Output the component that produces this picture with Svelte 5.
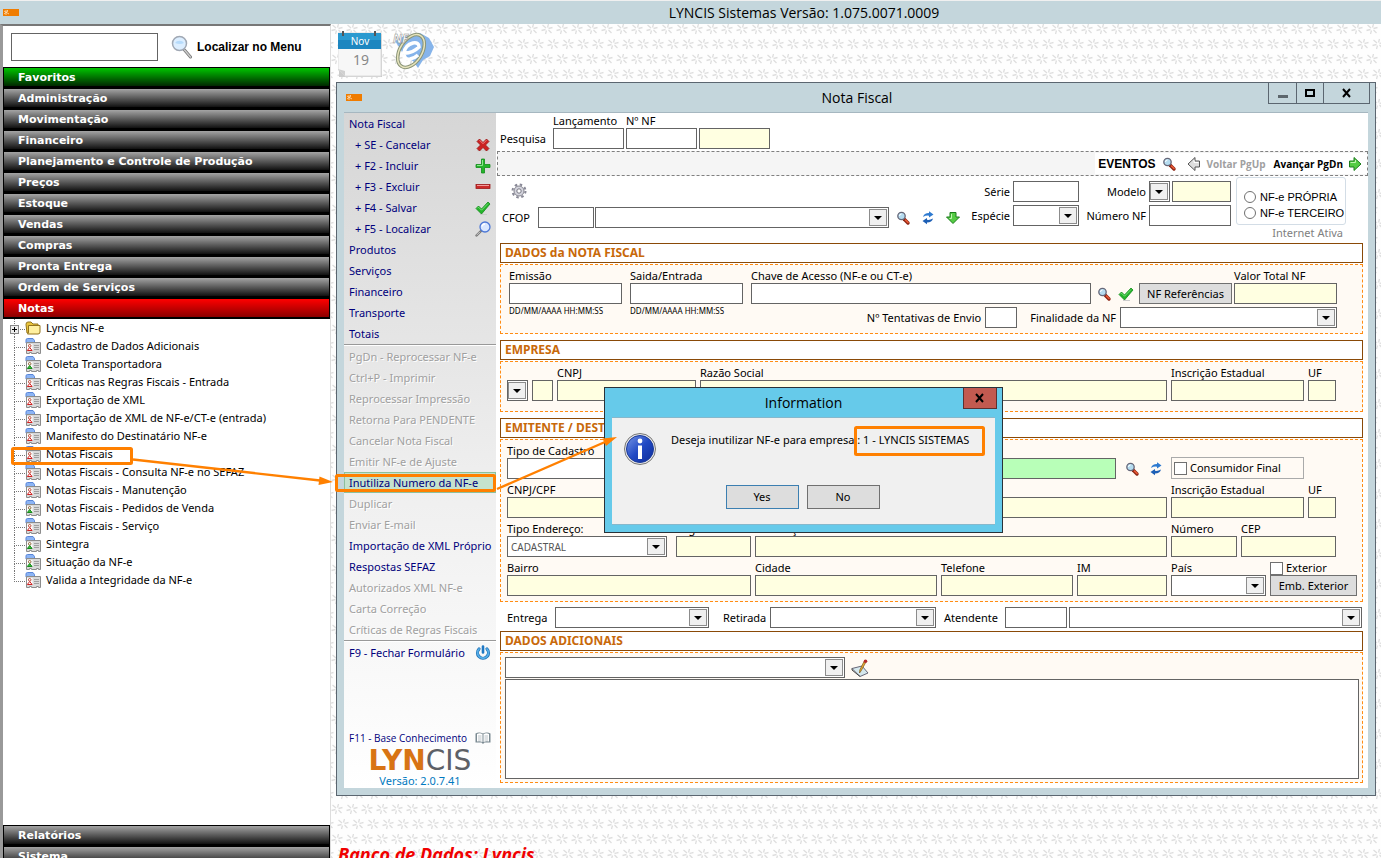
<script>
  const topMenu = [
    { label: 'Favoritos', tone: 'green' },
    { label: 'Administração' },
    { label: 'Movimentação' },
    { label: 'Financeiro' },
    { label: 'Planejamento e Controle de Produção' },
    { label: 'Preços' },
    { label: 'Estoque' },
    { label: 'Vendas' },
    { label: 'Compras' },
    { label: 'Pronta Entrega' },
    { label: 'Ordem de Serviços' },
    { label: 'Notas', tone: 'red' }
  ];
  const bottomMenu = [{ label: 'Relatórios' }, { label: 'Sistema' }];

  const tree = [
    { label: 'Lyncis NF-e', icon: 'folder' },
    { label: 'Cadastro de Dados Adicionais', icon: 'card-red' },
    { label: 'Coleta Transportadora', icon: 'card-green' },
    { label: 'Críticas nas Regras Fiscais - Entrada', icon: 'card-red' },
    { label: 'Exportação de XML', icon: 'card-red' },
    { label: 'Importação de XML de NF-e/CT-e (entrada)', icon: 'card-red' },
    { label: 'Manifesto do Destinatário NF-e', icon: 'card-red' },
    { label: 'Notas Fiscais', icon: 'card-red' },
    { label: 'Notas Fiscais - Consulta NF-e no SEFAZ', icon: 'card-red' },
    { label: 'Notas Fiscais - Manutenção', icon: 'card-red' },
    { label: 'Notas Fiscais - Pedidos de Venda', icon: 'card-green' },
    { label: 'Notas Fiscais - Serviço', icon: 'card-red' },
    { label: 'Sintegra', icon: 'card-green' },
    { label: 'Situação da NF-e', icon: 'card-green' },
    { label: 'Valida a Integridade da NF-e', icon: 'card-red' }
  ];

  const mainActions = [
    { label: 'Nota Fiscal' },
    { label: '+ SE - Cancelar', sub: true, icon: 'cancel' },
    { label: '+ F2 - Incluir', sub: true, icon: 'plus' },
    { label: '+ F3 - Excluir', sub: true, icon: 'minus' },
    { label: '+ F4 - Salvar', sub: true, icon: 'check' },
    { label: '+ F5 - Localizar', sub: true, icon: 'find' },
    { label: 'Produtos' },
    { label: 'Serviços' },
    { label: 'Financeiro' },
    { label: 'Transporte' },
    { label: 'Totais' }
  ];
  const extraActions = [
    { label: 'PgDn - Reprocessar NF-e', off: true },
    { label: 'Ctrl+P - Imprimir', off: true },
    { label: 'Reprocessar Impressão', off: true },
    { label: 'Retorna Para PENDENTE', off: true },
    { label: 'Cancelar Nota Fiscal', off: true },
    { label: 'Emitir NF-e de Ajuste', off: true },
    { label: 'Inutiliza Numero da NF-e', selected: true },
    { label: 'Duplicar', off: true },
    { label: 'Enviar E-mail', off: true },
    { label: 'Importação de XML Próprio' },
    { label: 'Respostas SEFAZ' },
    { label: 'Autorizados XML NF-e', off: true },
    { label: 'Carta Correção', off: true },
    { label: 'Críticas de Regras Fiscais', off: true }
  ];
</script>

{#snippet icon(name)}
  <svg class="icon" width="16" height="16" aria-hidden="true"><use href="#i-{name}" /></svg>
{/snippet}

{#snippet combo(id, label, text)}
  <span class="combo">
    <select {id} aria-label={label}>
      <option>{text ?? ''}</option>
    </select>
    <svg class="drop" width="18" height="17" aria-hidden="true"><use href="#i-drop" /></svg>
  </span>
{/snippet}

{#snippet field(id, label, tone)}
  <div class="field">
    <label for={id}>{label}</label>
    <input {id} type="text" class={tone} />
  </div>
{/snippet}

{#snippet comboField(id, label, text)}
  <div class="field">
    <label for={id}>{label}</label>
    {@render combo(id, undefined, text)}
  </div>
{/snippet}

{#snippet actions(list)}
  {#each list as item}
    <button class="action" class:sub={item.sub} class:selected={item.selected} disabled={item.off}>
      <span>{item.label}</span>
      {#if item.icon}{@render icon(item.icon)}{/if}
    </button>
  {/each}
{/snippet}

{#snippet badge()}
  <svg class="badge" width="16" height="7" aria-hidden="true">
    <rect width="16" height="7" fill="#f07c00" />
    <path d="M1 2l5 3M1 5l4-3M3 1v5M4 1l1 1" stroke="#ffe0b8" stroke-width=".8" />
  </svg>
{/snippet}

<svg class="sprite" aria-hidden="true">
  <symbol id="i-drop" viewBox="0 0 18 17">
    <rect x=".5" y=".5" width="17" height="16" fill="#f0f0f0" stroke="#8c8c8c" />
    <path d="M5 7h8l-4 4z" fill="#000" />
  </symbol>
  <symbol id="i-cancel" viewBox="0 0 16 16">
    <path d="M2 13.500h12" stroke="#ccc" stroke-width="1.500" />
    <path d="M4.500 2 8 5.500 11.500 2 14 4.500 10.500 8l3.500 3.500-2.500 2.500L8 10.500 4.500 14 2 11.500 5.500 8 2 4.500z" fill="#cc2222" stroke="#991515" stroke-width=".8" />
    <path d="M4.500 3.200 8 6.700l3.500-3.500" fill="none" stroke="#f08080" />
  </symbol>
  <symbol id="i-plus" viewBox="0 0 16 16">
    <path d="M6.500 1h3v5.500H15v3H9.500V15h-3V9.500H1v-3h5.500z" fill="#25b52b" stroke="#118a1a" stroke-width=".8" />
    <path d="M7.500 2v5.500H2" fill="none" stroke="#8be68c" />
  </symbol>
  <symbol id="i-minus" viewBox="0 0 16 16">
    <rect x="1" y="5.500" width="14" height="4" fill="#cc2a2a" stroke="#9b1a1a" stroke-width=".8" />
    <path d="M2 6.500h12" stroke="#f29a9a" />
  </symbol>
  <symbol id="i-check" viewBox="0 0 16 16">
    <path d="M5 14.500h7" stroke="#ccc" />
    <path d="M1 8.500 3.500 6 6.500 9 13 2l2 2L6.500 14z" fill="#25b52b" stroke="#118a1a" stroke-width=".8" />
    <path d="M2.500 8.200l1-1 3 3L13 3.500" fill="none" stroke="#8be68c" stroke-width=".8" />
  </symbol>
  <symbol id="i-find" viewBox="0 0 16 16">
    <path d="M1.500 14.500l4.500-4.500" stroke="#777" stroke-width="2.400" stroke-linecap="round" />
    <path d="M1.500 14.300l3.500-3.500" stroke="#ccc" stroke-width="1" />
    <circle cx="10" cy="6" r="5" fill="#d9e7ff" stroke="#4d78d6" stroke-width="1.300" />
    <path d="M7 5.500a3 3 0 0 1 3-2.500" stroke="#fff" stroke-width="1.300" fill="none" />
  </symbol>
  <symbol id="i-search" viewBox="0 0 16 16">
    <path d="M9 9l4 4" stroke="#8a2413" stroke-width="3.400" stroke-linecap="round" />
    <path d="M10.500 10l2.500 2.500" stroke="#ee5a35" stroke-width="1.600" stroke-linecap="round" />
    <circle cx="6.500" cy="6" r="3.700" fill="#b5dcf0" stroke="#667" stroke-width="1.300" />
    <path d="M4.500 6a2 2 0 0 1 2-2" stroke="#fff" fill="none" />
  </symbol>
  <symbol id="i-refresh" viewBox="0 0 16 16">
    <path d="M3 7q1-4 6-4V1.200l4.500 3.300L9 7.500V5.700Q6 5.200 3 7z" fill="#2e7ad0" />
    <path d="M13 8.500q-1 4-6 4v1.800L2.500 11 7 8v1.800q3 .5 6-1.300z" fill="#1d5fb5" />
  </symbol>
  <symbol id="i-down" viewBox="0 0 16 16">
    <path d="M5 2.500h6v4.500h3.500L8 13.500 1.500 7H5z" fill="#55cc44" stroke="#1b7d1b" />
    <path d="M6.500 4v4.500h-2" fill="none" stroke="#c0f5b0" />
  </symbol>
  <symbol id="i-right" viewBox="0 0 16 16">
    <path d="M2.500 5v6h4.500v3.500L14 8 7 1.500V5z" fill="#55cc44" stroke="#1b7d1b" />
    <path d="M3.500 6.500h5V4" fill="none" stroke="#c0f5b0" />
  </symbol>
  <symbol id="i-left" viewBox="0 0 16 16">
    <path d="M13.500 5v6H9v3.500L2 8l7-6.500V5z" fill="#dedede" stroke="#555" />
    <path d="M12.500 6.500H8V4" fill="none" stroke="#fff" />
  </symbol>
  <symbol id="i-gear" viewBox="0 0 16 16">
    <circle cx="8" cy="8" r="6.500" fill="none" stroke="#888896" stroke-width="2" stroke-dasharray="2.500 2.600" />
    <circle cx="8" cy="8" r="5" fill="#d5d5de" stroke="#85858f" />
    <circle cx="8" cy="8" r="2.200" fill="#fff" stroke="#777783" />
  </symbol>
  <symbol id="i-power" viewBox="0 0 16 16">
    <path d="M4 4a5.500 5.500 0 1 0 8 0" fill="none" stroke="#1e6fb4" stroke-width="3.200" stroke-linecap="round" />
    <path d="M4 4a5.500 5.500 0 1 0 8 0" fill="none" stroke="#55aee8" stroke-width="1.800" stroke-linecap="round" />
    <path d="M8 1.500v6" stroke="#1e78c4" stroke-width="2.600" stroke-linecap="round" />
  </symbol>
  <symbol id="i-book" viewBox="0 0 16 16">
    <path d="M.5 3.500q3.500-2 7.500 0 4-2 7.500 0v9H9.500L8 14l-1.500-1.500h-6z" fill="#7b8a92" />
    <path d="M2 4q3-1.500 5.500.300V12Q5 10.800 2 11.500zM14 4q-3-1.500-5.500.300V12q2.500-1.200 5.500-.5z" fill="#fff" />
    <path d="M3 6h3.500M3 8h3.500M3 10h3.500M9.500 6H13M9.500 8H13M9.500 10H13" stroke="#a9b4ba" stroke-width=".8" />
  </symbol>
  <symbol id="i-edit" viewBox="0 0 18 18">
    <path d="M1 9.500 11 7l6 7-8 3.500z" fill="#d5e8ee" stroke="#667" />
    <path d="M1 9.500v1.500l8 6.500" fill="none" stroke="#444" />
    <path d="M15 3 10 12l-1.500 2 .300-3L13 2.500z" fill="#e8a92e" stroke="#7a5a1e" stroke-width=".7" />
    <circle cx="14.500" cy="2.200" r="1.800" fill="#b52a2a" />
  </symbol>
  <symbol id="i-folder" viewBox="0 0 16 16">
    <path d="M1 4.500Q1 2 3 2h3l2 2h5v9H2z" fill="#e9c43c" stroke="#94741c" />
    <path d="M3.500 5.500h11.500V12q0 2-2 2H2.500q1-1 1-2z" fill="#fff0a0" stroke="#94741c" />
  </symbol>
  <symbol id="i-card-base" viewBox="0 0 16 16">
    <path d="M1 5V2Q1 .5 2.500 .5H8L9.500 2.500V5z" fill="#8bb4f5" stroke="#5a86d8" />
    <path d="M1.500 4.500h14v11h-2v-1h-2v1h-5v-1h-2v1h-3z" fill="#d9d9d9" stroke="#8c8c8c" />
    <rect x="2" y="6" width="5.500" height="7" fill="#fff" />
    <path d="M9 7.500h5M9 9.500h5M9 11.500h5" stroke="#a0a0a0" />
  </symbol>
  <symbol id="i-card-red" viewBox="0 0 16 16">
    <use href="#i-card-base" />
    <circle cx="4.700" cy="7.800" r="1.300" fill="#fff" stroke="#b5402a" stroke-width=".9" />
    <path d="M2.300 12.500 4.700 9.500l2.400 3z" fill="#fff" stroke="#d02020" />
  </symbol>
  <symbol id="i-card-green" viewBox="0 0 16 16">
    <use href="#i-card-base" />
    <circle cx="4.700" cy="7.800" r="1.300" fill="#fff" stroke="#8a5a2a" stroke-width=".9" />
    <path d="M2.300 12.500 4.700 9.500l2.400 3z" fill="#3cc03c" stroke="#16881c" />
  </symbol>
</svg>

<div class="app">
  <header class="app-bar">
    {@render badge()}
    <h1>LYNCIS Sistemas Versão: 1.075.0071.0009</h1>
  </header>

  <div class="workspace">
    <aside class="sidebar">
      <div class="finder">
        <input id="menu-search" type="text" />
        <svg width="22" height="24" viewBox="0 0 22 24" aria-hidden="true">
          <path d="M13.500 15l6 7" stroke="#777" stroke-width="3" stroke-linecap="round" />
          <path d="M13.500 15l6 7" stroke="#ccc" stroke-width="1.400" stroke-linecap="round" />
          <circle cx="8.500" cy="8.500" r="7" fill="#dceeff" stroke="#a0a8b4" stroke-width="1.500" />
          <path d="M4 8a5 4 0 0 1 9 0q-4 2-9 0z" fill="#b6dbfb" />
        </svg>
        <label for="menu-search">Localizar no Menu</label>
      </div>

      <nav class="menu">
        {#each topMenu as item}
          <button class={item.tone}>{item.label}</button>
        {/each}
      </nav>

      <ul class="tree">
        {#each tree as node, i}
          <li class:last={i === tree.length - 1}>
            {#if i === 0}
              <svg class="expander" width="9" height="9" aria-hidden="true">
                <rect x=".5" y=".5" width="8" height="8" fill="#eee" stroke="#888" />
                <path d="M2 4.500h5M4.500 2v5" stroke="#000" />
              </svg>
            {/if}
            {@render icon(node.icon)}
            <a href="#menu">{node.label}</a>
          </li>
        {/each}
      </ul>

      <nav class="menu bottom">
        {#each bottomMenu as item}
          <button>{item.label}</button>
        {/each}
      </nav>
    </aside>

    <main class="desktop">
      <svg class="pattern" aria-hidden="true">
        <defs>
          <path id="star" d="M.5-1.500 1.500-5M1.500-.5l4-1M1.500 1 4.500 4M-.5 1.500-1.500 5M-1.500.5l-4 1M-1-1-4.500-4" stroke="#dedede" stroke-width="1.300" />
          <pattern id="stars" width="15" height="30" patternUnits="userSpaceOnUse">
            <use href="#star" x="6" y="5" />
            <use href="#star" x="12" y="20" />
            <use href="#star" x="-3" y="20" />
          </pattern>
        </defs>
        <rect width="100%" height="100%" fill="url(#stars)" />
      </svg>

      <div class="shortcuts">
        <svg width="46" height="48" viewBox="0 0 46 48" role="img" aria-label="19 Nov">
          <path d="M1 3h43v43H1z" fill="#ccc" />
          <path d="M0 2h43v43H7L0 38z" fill="#f7f7f7" stroke="#ddd" />
          <path d="M0 38l7 7v-5z" fill="#d0d0d0" />
          <path d="M0 2h43v16H0z" fill="#1d86c0" />
          <path d="M0 2h43v7H0z" fill="#2b9ad0" />
          <path d="M5 0v5M37 0v5" stroke="#555" stroke-width="2" />
          <text x="22" y="14" class="cal-month">Nov</text>
          <text x="23" y="34" class="cal-day">19</text>
        </svg>
        <svg width="44" height="40" viewBox="0 0 44 40" role="img" aria-label="NF-e">
          <path d="M3 10l9-5 8 1 8-4 9 5 5 9-4 9-7 4-5 8-5-7-9-4-3-7z" fill="#86b4ea" />
          <ellipse cx="19" cy="20" rx="11" ry="18" transform="rotate(32 19 20)" fill="none" stroke="#8a9577" stroke-width="3.500" />
          <ellipse cx="19" cy="20" rx="11" ry="18" transform="rotate(32 19 20)" fill="none" stroke="#e6e3bd" stroke-width="1.500" />
          <path d="M10 22q10 1 17-6 0-5-6-4-8 2-9 10 0 7 6 6 5-1 8-4" fill="none" stroke="#fff" stroke-width="3.500" />
          <text x="1" y="12" class="nfe">NF</text>
        </svg>
      </div>

      <section class="window">
        <header class="title-bar">
          {@render badge()}
          <h2>Nota Fiscal</h2>
          <div class="controls">
            <button aria-label="Minimizar">
              <svg width="12" height="12"><path d="M1 9.500h10" stroke="#5c666c" stroke-width="3" /></svg>
            </button>
            <button aria-label="Maximizar">
              <svg width="12" height="12"><path d="M2 3h8v6H2z" fill="none" stroke="#000" stroke-width="2" /></svg>
            </button>
            <button aria-label="Fechar">
              <svg width="12" height="12"><path d="M2 2l7 8M9 2l-7 8" stroke="#000" stroke-width="2" /></svg>
            </button>
          </div>
        </header>

        <div class="client">
          <nav class="actions">
            {@render actions(mainActions)}
            <hr />
            {@render actions(extraActions)}
            <hr />
            <button class="action"><span>F9 - Fechar Formulário</span>{@render icon('power')}</button>
            <div class="brand">
              <button class="action small"><span>F11 - Base Conhecimento</span>{@render icon('book')}</button>
              <p class="logo"><b>LYN</b>CIS</p>
              <p class="version">Versão: 2.0.7.41</p>
            </div>
          </nav>

          <form class="form" onsubmit={(e) => e.preventDefault()}>
            <div class="lookup">
              <span class="caption">Pesquisa</span>
              {@render field('lancamento', 'Lançamento')}
              {@render field('nf', 'Nº NF')}
              <input type="text" class="yellow" aria-label="Resultado" />
            </div>

            <div class="toolbar">
              <button class="events">EVENTOS {@render icon('search')}</button>
              <button class="prev" disabled>{@render icon('left')} Voltar PgUp</button>
              <button class="next">Avançar PgDn {@render icon('right')}</button>
            </div>

            <div class="head">
              <div class="head-main">
                {@render icon('gear')}
                <div class="cfop">
                  <label for="cfop">CFOP</label>
                  <input id="cfop" type="text" />
                  {@render combo('cfop-desc', 'Descrição CFOP')}
                  <div class="cfop-icons">
                    {@render icon('search')}
                    {@render icon('refresh')}
                    {@render icon('down')}
                  </div>
                </div>
              </div>
              <div class="head-grid">
                <label for="serie">Série</label>
                <input id="serie" type="text" />
                <label for="modelo">Modelo</label>
                <div class="model">
                  {@render combo('modelo')}
                  <input type="text" class="yellow" aria-label="Descrição do modelo" />
                </div>
                <label for="especie">Espécie</label>
                {@render combo('especie')}
                <label for="numero-nf">Número NF</label>
                <input id="numero-nf" type="text" />
              </div>
              <div class="origin">
                <fieldset>
                  <label><input type="radio" name="origem" />NF-e PRÓPRIA</label>
                  <label><input type="radio" name="origem" />NF-e TERCEIRO</label>
                </fieldset>
                <p>Internet Ativa</p>
              </div>
            </div>

            <section class="block">
              <h3>DADOS da NOTA FISCAL</h3>
              <div class="panel invoice">
                <div class="dated">
                  {@render field('emissao', 'Emissão')}
                  <small>DD/MM/AAAA HH:MM:SS</small>
                </div>
                <div class="dated">
                  {@render field('saida', 'Saida/Entrada')}
                  <small>DD/MM/AAAA HH:MM:SS</small>
                </div>
                <div class="invoice-rest">
                  <div class="key-row">
                    {@render field('chave', 'Chave de Acesso (NF-e ou CT-e)')}
                    <div class="key-icons">{@render icon('search')}{@render icon('check')}</div>
                    <button class="push">NF Referências</button>
                    {@render field('valor', 'Valor Total NF', 'yellow')}
                  </div>
                  <div class="send-row">
                    <label for="tentativas">Nº Tentativas de Envio</label>
                    <input id="tentativas" type="text" />
                    <label for="finalidade">Finalidade da NF</label>
                    {@render combo('finalidade')}
                  </div>
                </div>
              </div>
            </section>

            <section class="block">
              <h3>EMPRESA</h3>
              <div class="panel company">
                <div class="row company-row">
                  {@render combo('empresa', 'Empresa')}
                  <input type="text" class="yellow" aria-label="Código da empresa" />
                  {@render field('emp-cnpj', 'CNPJ', 'yellow')}
                  {@render field('emp-razao', 'Razão Social', 'yellow')}
                  {@render field('emp-ie', 'Inscrição Estadual', 'yellow')}
                  {@render field('emp-uf', 'UF', 'yellow')}
                </div>
              </div>
            </section>

            <section class="block">
              <h3>EMITENTE / DESTINATÁRIO</h3>
              <div class="panel party">
                <div class="row type-row">
                  {@render comboField('tipo-cad', 'Tipo de Cadastro')}
                  <input type="text" class="green" aria-label="Nome do cadastro" />
                  <div class="party-icons">{@render icon('search')}{@render icon('refresh')}</div>
                  <label class="tick boxed"><input type="checkbox" />Consumidor Final</label>
                </div>
                <div class="row doc-row">
                  {@render field('doc', 'CNPJ/CPF', 'yellow')}
                  {@render field('razao', 'Razão Social', 'yellow')}
                  {@render field('ie', 'Inscrição Estadual', 'yellow')}
                  {@render field('uf', 'UF', 'yellow')}
                </div>
                <div class="row address-row">
                  {@render comboField('tipo-end', 'Tipo Endereço:', 'CADASTRAL')}
                  {@render field('logradouro', 'Logradouro', 'yellow')}
                  {@render field('endereco', 'Endereço', 'yellow')}
                  {@render field('numero', 'Número', 'yellow')}
                  {@render field('cep', 'CEP', 'yellow')}
                </div>
                <div class="row city-row">
                  {@render field('bairro', 'Bairro', 'yellow')}
                  {@render field('cidade', 'Cidade', 'yellow')}
                  {@render field('telefone', 'Telefone', 'yellow')}
                  {@render field('im', 'IM', 'yellow')}
                  {@render comboField('pais', 'País')}
                  <div class="foreign">
                    <label class="tick"><input type="checkbox" />Exterior</label>
                    <button class="push">Emb. Exterior</button>
                  </div>
                </div>
              </div>
            </section>

            <div class="strip">
              <label for="entrega">Entrega</label>
              {@render combo('entrega')}
              <label for="retirada">Retirada</label>
              {@render combo('retirada')}
              <label for="atendente">Atendente</label>
              <input id="atendente" type="text" />
              {@render combo('atendente-nome', 'Nome do atendente')}
            </div>

            <section class="block notes">
              <h3>DADOS ADICIONAIS</h3>
              <div class="panel">
                <div class="note-row">
                  {@render combo('dados-ad', 'Dados adicionais')}
                  <svg width="18" height="18" aria-hidden="true"><use href="#i-edit" /></svg>
                </div>
                <textarea aria-label="Texto dos dados adicionais"></textarea>
              </div>
            </section>
          </form>
        </div>

        <div class="dialog" role="dialog" aria-labelledby="dialog-title">
          <header>
            <h2 id="dialog-title">Information</h2>
            <button class="close" aria-label="Fechar">
              <svg width="12" height="12"><path d="M2 2l7 8M9 2l-7 8" stroke="#000" stroke-width="2" /></svg>
            </button>
          </header>
          <div class="dialog-body">
            <div class="message">
              <svg width="34" height="34" viewBox="0 0 34 34" aria-hidden="true">
                <defs>
                  <linearGradient id="info-fill" x1="0" y1="0" x2="1" y2="1">
                    <stop offset="0" stop-color="#7796e6" />
                    <stop offset=".5" stop-color="#2149c4" />
                    <stop offset="1" stop-color="#0d2c98" />
                  </linearGradient>
                </defs>
                <circle cx="17" cy="17" r="15.500" fill="#e8e8e8" stroke="#777" />
                <circle cx="17" cy="17" r="13.500" fill="url(#info-fill)" stroke="#1b3a9a" />
                <circle cx="17" cy="9" r="2.400" fill="#fff" />
                <path d="M15 13.500h4V27h-4z" fill="#fff" />
              </svg>
              <p>Deseja inutilizar NF-e para empresa : 1 - LYNCIS SISTEMAS</p>
            </div>
            <div class="answers">
              <button class="push focus">Yes</button>
              <button class="push">No</button>
            </div>
          </div>
        </div>
      </section>

      <p class="database">Banco de Dados: Lyncis</p>
    </main>
  </div>

  <!-- passo a passo desenhado por cima da tela -->
  <svg class="guide" aria-hidden="true">
    <g fill="none" stroke="#ff8000" stroke-width="3">
      <rect x="12.500" y="448.500" width="119" height="15" rx="1" />
      <rect x="336.500" y="475.500" width="158" height="15" rx="1" />
      <rect x="855.500" y="427.500" width="128" height="27" rx="1" />
    </g>
    <path d="M133 459.500 320 480.500M497 489 605 442" stroke="#ff8000" stroke-width="2.400" />
    <path d="M333 482l-14.500 3 1-8.500zM617 437l-11 9-3.500-7.500z" fill="#ff8000" />
  </svg>
</div>

<style>
  :global(body) {
    margin: 0;
    overflow: hidden;
    background: #fff;
  }

  .app {
    position: relative;
    display: flex;
    flex-direction: column;
    height: 100vh;
    overflow: hidden;
    font: 11px/14px 'Noto Sans', 'Open Sans', sans-serif;
    color: #000;
  }

  .app *, .app *::before {
    box-sizing: border-box;
  }

  h1, h2, h3, p, ul, fieldset {
    margin: 0;
    padding: 0;
  }

  button, input, select, textarea {
    margin: 0;
    font: inherit;
    color: inherit;
  }

  button {
    padding: 0;
    border: 0;
    background: none;
    cursor: pointer;
  }

  svg {
    display: block;
    flex: none;
  }

  .sprite {
    position: absolute;
    width: 0;
    height: 0;
  }

  h1, h2 {
    flex: 1;
    font: 14px/18px 'Open Sans', 'Noto Sans', sans-serif;
    text-align: center;
  }

  /* barra do sistema */
  .app-bar {
    display: flex;
    align-items: center;
    flex: none;
    height: 24px;
    padding-left: 3px;
    border-top: 1px solid #f0f0f0;
    background: #c4d6dc;
  }

  .app-bar h1 {
    padding-left: 208px;
  }

  .workspace {
    display: flex;
    flex: 1;
    min-height: 0;
  }

  /* menu lateral */
  .sidebar {
    display: flex;
    flex-direction: column;
    flex: none;
    width: 331px;
    border-top: 2px solid #777;
    border-left: 3px solid #999;
    border-right: 1px solid #ddd;
    background: #fff;
  }

  .finder {
    display: flex;
    align-items: center;
    flex: none;
    height: 41px;
    padding-left: 8px;
    font: bold 12px/16px 'Liberation Sans', Arial, sans-serif;
  }

  .finder input {
    width: 147px;
    height: 28px;
    margin-right: 13px;
  }

  .finder label {
    padding-left: 4px;
  }

  .menu {
    flex: none;
  }

  .menu button {
    display: block;
    width: 100%;
    height: 21px;
    padding: 1px 0 0 14px;
    border: 1px solid #000;
    border-bottom-width: 2px;
    background: linear-gradient(#a4a4a4, #111);
    color: #fff;
    font: bold 11px/16px 'DejaVu Sans', Verdana, sans-serif;
    text-align: left;
  }

  .menu button.green {
    background: linear-gradient(#00c400, #002800);
  }

  .menu button.red {
    background: linear-gradient(#ff0000, #8c0000);
  }

  .menu.bottom {
    height: 33px;
    overflow: hidden;
  }

  .tree {
    flex: 1;
    overflow: hidden;
    list-style: none;
  }

  .tree li {
    position: relative;
    display: flex;
    align-items: center;
    gap: 5px;
    height: 18px;
    padding-left: 22px;
  }

  .tree li::before {
    content: '';
    position: absolute;
    left: 11px;
    top: 0;
    width: 11px;
    height: 11px;
    border-left: 1px dotted #777;
    border-bottom: 1px dotted #777;
  }

  .tree li:not(.last)::after {
    content: '';
    position: absolute;
    left: 11px;
    top: 11px;
    height: 7px;
    border-left: 1px dotted #777;
  }

  .expander {
    position: absolute;
    left: 7px;
    top: 6px;
    z-index: 1;
  }

  .tree a {
    color: #000;
    text-decoration: none;
  }

  /* área de trabalho */
  .desktop {
    position: relative;
    display: flex;
    flex-direction: column;
    flex: 1;
    min-width: 0;
    padding: 0 5px;
    background: #fefefe;
  }

  .pattern {
    position: absolute;
    inset: 0;
    width: 100%;
    height: 100%;
  }

  .shortcuts {
    position: relative;
    display: flex;
    gap: 8px;
    flex: none;
    height: 58px;
    padding: 7px 0 0 2px;
  }

  .cal-month {
    fill: #fff;
    font-size: 10px;
    text-anchor: middle;
  }

  .cal-day {
    fill: #888;
    font-size: 14px;
    text-anchor: middle;
  }

  .nfe {
    fill: #fff;
    stroke: #888;
    stroke-width: .5px;
    font-size: 12px;
    font-weight: 700;
    font-style: italic;
  }

  .database {
    position: relative;
    flex: none;
    padding: 48px 0 0 2px;
    color: #f00000;
    font: italic bold 18px/20px 'Open Sans', 'Noto Sans', sans-serif;
  }

  /* janela */
  .window {
    position: relative;
    flex: none;
    padding: 0 7px 7px;
    border: 1px solid #5b6670;
    background: #c4d6dc;
  }

  .title-bar {
    display: flex;
    align-items: center;
    height: 29px;
    padding-left: 2px;
  }

  .title-bar h2 {
    padding-left: 84px;
  }

  .controls {
    display: flex;
    align-self: flex-start;
    height: 21px;
    margin-right: -2px;
    border: 1px solid #5b6670;
    border-top: 0;
  }

  .controls button {
    display: grid;
    place-items: center;
    width: 27px;
  }

  .controls button + button {
    border-left: 1px solid #5b6670;
  }

  .controls button:last-child {
    width: 46px;
  }

  .client {
    display: flex;
    border-top: 1px solid #a6b7c0;
    background: #fff;
  }

  .actions {
    display: flex;
    flex-direction: column;
    flex: none;
    width: 152px;
    background: linear-gradient(#d6d6d6, #efefef 55%, #fff);
  }

  .action {
    display: flex;
    align-items: center;
    justify-content: space-between;
    height: 21px;
    padding-left: 5px;
    color: #00007c;
    text-align: left;
    white-space: nowrap;
  }

  .action .icon {
    margin-right: 5px;
  }

  .action.sub {
    padding-left: 11px;
  }

  .action:disabled {
    color: #a0a0a0;
    text-shadow: 1px 1px #fff;
  }

  .action.selected {
    padding-left: 4px;
    border: 1px solid #8cc09c;
    background: #c5e2cd;
  }

  .action.small {
    width: 100%;
    font: 10px/14px 'Open Sans', 'Noto Sans', sans-serif;
  }

  .actions hr {
    width: 100%;
    margin: 0;
    border: 0;
    border-top: 1px solid #999;
    border-bottom: 1px solid #fff;
  }

  .brand {
    margin-top: auto;
    text-align: center;
  }

  .logo {
    color: #5d6066;
    font: 28px/26px 'DejaVu Sans', Verdana, sans-serif;
  }

  .logo b {
    color: #d87414;
  }

  .version {
    color: #0079c0;
  }

  /* formulário */
  .form {
    flex: 1;
    min-width: 0;
    padding: 0 5px 5px 4px;
  }

  input[type='text'], select, textarea {
    display: block;
    border: 1px solid #646464;
    border-radius: 0;
    background: #fff;
    outline: none;
  }

  .form input[type='text'], .form select {
    width: 100%;
    height: 21px;
    padding: 0 3px;
  }

  .form .yellow {
    background: #ffffe1;
  }

  .form .green {
    background: #b8ffb8;
  }

  .combo {
    position: relative;
    display: block;
    min-width: 0;
  }

  .combo select {
    appearance: none;
    color: #555;
    font-size: 10px;
  }

  .drop {
    position: absolute;
    top: 2px;
    right: 2px;
    pointer-events: none;
  }

  .field {
    min-width: 0;
  }

  .field label {
    display: block;
    line-height: 15px;
    white-space: nowrap;
  }

  .lookup {
    display: grid;
    grid-template-columns: 51px 71px 71px 71px;
    align-items: end;
    gap: 2px;
  }

  .caption {
    line-height: 20px;
  }

  .toolbar {
    display: flex;
    justify-content: flex-end;
    height: 25px;
    margin: 2px -5px 0 -3px;
    border: 1px dashed #808080;
    background: #f5f5f5;
  }

  .toolbar button {
    display: flex;
    align-items: center;
    gap: 4px;
    margin: 1px 0;
    padding: 0 4px;
    background: #fff;
    font: bold 10px/14px 'Open Sans', 'Noto Sans', sans-serif;
  }

  .toolbar .events {
    gap: 6px;
    padding: 0 5px 0 3px;
    font: bold 12px/16px 'Liberation Sans', Arial, sans-serif;
  }

  .toolbar .prev {
    color: #a0a0a0;
  }

  .head {
    display: flex;
    height: 67px;
    padding-right: 17px;
  }

  .head-main {
    flex: 1;
    padding: 7px 0 0 2px;
  }

  .head-main > .icon {
    margin: 0 0 8px 9px;
  }

  .cfop {
    display: grid;
    grid-template-columns: 35px 56px 1fr auto;
    align-items: center;
    gap: 1px;
  }

  .cfop-icons {
    display: flex;
    gap: 9px;
    padding: 0 7px 0 5px;
  }

  .head-grid {
    display: grid;
    grid-template-columns: 45px 66px 70px 82px;
    align-content: start;
    align-items: center;
    row-gap: 3px;
    padding-top: 5px;
  }

  .head-grid label {
    padding-right: 3px;
    text-align: right;
    white-space: nowrap;
  }

  .model {
    display: grid;
    grid-template-columns: 21px 1fr;
    gap: 2px;
  }

  .origin {
    width: 110px;
    margin: 1px 0 0 5px;
  }

  .origin fieldset {
    display: flex;
    flex-direction: column;
    gap: 2px;
    height: 48px;
    padding: 12px 0 0 7px;
    border: 1px solid #d3dde6;
    border-radius: 3px;
  }

  .origin label {
    display: flex;
    align-items: center;
    gap: 4px;
    font: 11px/14px 'Liberation Sans', Arial, sans-serif;
    white-space: nowrap;
  }

  .origin input {
    appearance: none;
    width: 12px;
    height: 12px;
    border: 1px solid #707070;
    border-radius: 50%;
    background: #fff;
  }

  .origin p {
    padding: 1px 3px 0 0;
    color: #808080;
    text-align: right;
  }

  .block + .block {
    margin-top: 6px;
  }

  .block h3 {
    height: 20px;
    margin-bottom: 1px;
    padding-left: 4px;
    border: 1px solid #8a4a08;
    background: #fff;
    color: #c8690a;
    font-size: 12px;
    font-weight: 700;
    line-height: 18px;
  }

  .panel {
    padding: 3px 5px 5px 6px;
    border: 1px dashed #ff8c14;
    background: #fffaf4;
  }

  .invoice {
    display: flex;
    gap: 8px;
    padding: 3px 25px 5px 8px;
  }

  .dated {
    width: 113px;
  }

  .dated small {
    display: block;
    font-size: 8px;
    line-height: 14px;
    white-space: nowrap;
  }

  .invoice-rest {
    display: flex;
    flex-direction: column;
    flex: 1;
    gap: 3px;
  }

  .key-row {
    display: grid;
    grid-template-columns: 1fr auto 93px 103px;
    align-items: end;
    column-gap: 2px;
  }

  .key-icons {
    display: flex;
    gap: 6px;
    padding: 2px 3px;
  }

  .push {
    height: 21px;
    border: 1px solid #707070;
    background: #dddddd;
    white-space: nowrap;
  }

  .send-row {
    display: grid;
    grid-template-columns: auto 32px auto 217px;
    justify-content: end;
    align-items: center;
    gap: 4px;
  }

  .send-row label + input + label {
    padding-left: 9px;
  }

  .row {
    display: grid;
    align-items: end;
    gap: 4px;
    padding-right: 21px;
  }

  .row + .row {
    margin-top: 3px;
  }

  .company {
    padding-bottom: 10px;
  }

  .company-row {
    grid-template-columns: 21px 21px 139px 1fr 133px 28px;
  }

  .type-row {
    grid-template-columns: 160px 1fr auto 133px 28px;
  }

  .party-icons {
    display: flex;
    gap: 8px;
    padding: 2px 3px 2px 4px;
  }

  .doc-row {
    grid-template-columns: 140px 1fr 133px 28px;
  }

  .address-row {
    grid-template-columns: 165px 75px 1fr 66px 95px;
  }

  .address-row .field:first-child {
    padding-right: 5px;
  }

  .city-row {
    grid-template-columns: 244px 1fr 132px 90px 95px 87px;
    padding-right: 0;
  }

  .tick {
    display: flex;
    align-items: center;
    gap: 3px;
  }

  .tick input {
    appearance: none;
    width: 13px;
    height: 13px;
    border: 1px solid #707070;
    background: #fff;
  }

  .boxed {
    height: 22px;
    padding-left: 2px;
    border: 1px solid #aaa;
  }

  .foreign .push {
    display: block;
    width: 100%;
  }

  .strip {
    display: grid;
    grid-template-columns: 48px 154px 61px 166px 69px 62px 1fr;
    align-items: center;
    padding: 5px 1px 3px 7px;
  }

  .strip label:nth-of-type(2) {
    padding-left: 14px;
  }

  .strip label:nth-of-type(3) {
    padding-left: 8px;
  }

  .strip input + .combo {
    margin-left: 2px;
  }

  .notes .panel {
    padding: 4px 3px 3px 4px;
  }

  .note-row {
    display: grid;
    grid-template-columns: 340px 18px;
    align-items: center;
    gap: 6px;
    margin-bottom: 1px;
  }

  .notes textarea {
    width: 100%;
    height: 100px;
    resize: none;
  }

  /* caixa de mensagem */
  .dialog {
    position: absolute;
    left: 267px;
    top: 304px;
    width: 399px;
    padding: 0 7px 7px;
    border: 1px solid #2a3238;
    background: #66caea;
  }

  .dialog header {
    display: flex;
    align-items: center;
    height: 29px;
  }

  .dialog h2 {
    padding-left: 32px;
  }

  .close {
    display: grid;
    place-items: center;
    align-self: flex-start;
    width: 34px;
    height: 21px;
    margin-right: -2px;
    border: 1px solid #5c3030;
    border-top: 0;
    background: #c25a50;
  }

  .dialog-body {
    border: 1px solid #86b8cc;
    border-width: 1px 0;
    background: #f0f0f0;
  }

  .message {
    display: flex;
    gap: 14px;
    padding: 14px 0 0 11px;
    line-height: 16px;
    white-space: nowrap;
  }

  .answers {
    display: flex;
    justify-content: center;
    gap: 8px;
    padding: 19px 2px 15px 0;
  }

  .answers .push {
    width: 73px;
    height: 24px;
  }

  .answers .focus {
    border-color: #3c7fb1;
  }

  .guide {
    position: absolute;
    inset: 0;
    width: 100%;
    height: 100%;
    pointer-events: none;
  }
</style>
